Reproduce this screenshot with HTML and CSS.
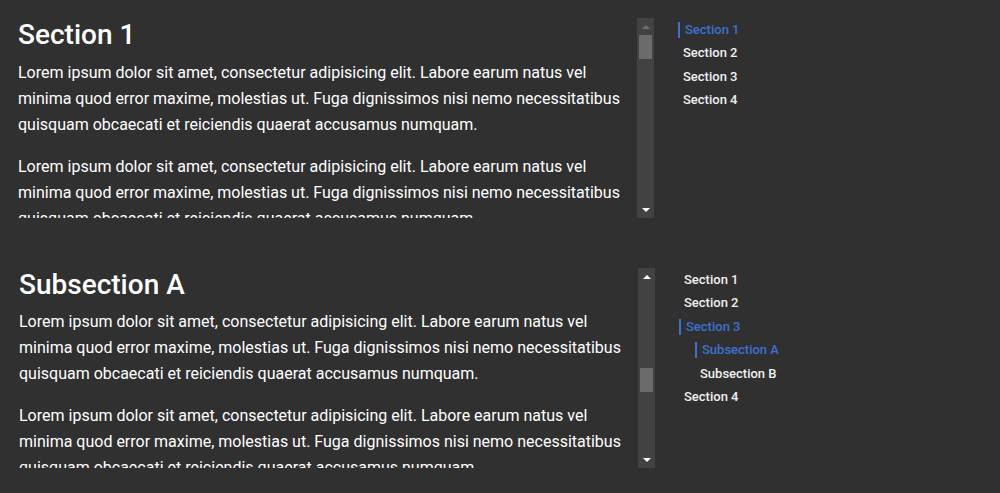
FILE: index.html
```html
<!DOCTYPE html>
<html lang="en">
<head>
<meta charset="utf-8">
<title>Scrollspy</title>
<link rel="stylesheet" href="styles.css">
</head>
<body>
<div class="page">
  <div class="example">
    <div class="scroll-area">
      <div class="scroll-box" id="box1">
        <h4 id="s1">Section 1</h4>
        <p>Lorem ipsum dolor sit amet, consectetur adipisicing elit. Labore earum natus vel minima quod error maxime, molestias ut. Fuga dignissimos nisi nemo necessitatibus quisquam obcaecati et reiciendis quaerat accusamus numquam.</p>
        <p>Lorem ipsum dolor sit amet, consectetur adipisicing elit. Labore earum natus vel minima quod error maxime, molestias ut. Fuga dignissimos nisi nemo necessitatibus quisquam obcaecati et reiciendis quaerat accusamus numquam.</p>
        <p>Lorem ipsum dolor sit amet, consectetur adipisicing elit. Labore earum natus vel minima quod error maxime, molestias ut. Fuga dignissimos nisi nemo necessitatibus quisquam obcaecati et reiciendis quaerat accusamus numquam.</p>
        <h4 id="s2">Section 2</h4>
        <p>Lorem ipsum dolor sit amet, consectetur adipisicing elit. Labore earum natus vel minima quod error maxime, molestias ut. Fuga dignissimos nisi nemo necessitatibus quisquam obcaecati et reiciendis quaerat accusamus numquam.</p>
        <p>Lorem ipsum dolor sit amet, consectetur adipisicing elit. Labore earum natus vel minima quod error maxime, molestias ut. Fuga dignissimos nisi nemo necessitatibus quisquam obcaecati et reiciendis quaerat accusamus numquam.</p>
        <h4 id="s3">Section 3</h4>
        <p>Lorem ipsum dolor sit amet, consectetur adipisicing elit. Labore earum natus vel minima quod error maxime, molestias ut. Fuga dignissimos nisi nemo necessitatibus quisquam obcaecati et reiciendis quaerat accusamus numquam.</p>
        <p>Lorem ipsum dolor sit amet, consectetur adipisicing elit. Labore earum natus vel minima quod error maxime, molestias ut. Fuga dignissimos nisi nemo necessitatibus quisquam obcaecati et reiciendis quaerat accusamus numquam.</p>
        <h4 id="s4">Section 4</h4>
        <p>Lorem ipsum dolor sit amet, consectetur adipisicing elit. Labore earum natus vel minima quod error maxime, molestias ut. Fuga dignissimos nisi nemo necessitatibus quisquam obcaecati et reiciendis quaerat accusamus numquam.</p>
        <p>Lorem ipsum dolor sit amet, consectetur adipisicing elit. Labore earum natus vel minima quod error maxime, molestias ut. Fuga dignissimos nisi nemo necessitatibus quisquam obcaecati et reiciendis quaerat accusamus numquam.</p>
      </div>
      <div class="scrollbar" aria-hidden="true">
        <div class="sb-button"><span class="arrow-up disabled"></span></div>
        <div class="sb-track"><div class="sb-thumb" style="top: 0px;"></div></div>
        <div class="sb-button"><span class="arrow-down"></span></div>
      </div>
    </div>
    <nav class="spy-nav">
      <ul class="nav-list">
        <li><a class="nav-link active" href="#s1">Section 1</a></li>
        <li><a class="nav-link" href="#s2">Section 2</a></li>
        <li><a class="nav-link" href="#s3">Section 3</a></li>
        <li><a class="nav-link" href="#s4">Section 4</a></li>
      </ul>
    </nav>
  </div>

  <div class="example example-second">
    <div class="scroll-area">
      <div class="scroll-box" id="box2">
        <h4 id="t1">Section 1</h4>
        <p>Lorem ipsum dolor sit amet, consectetur adipisicing elit. Labore earum natus vel minima quod error maxime, molestias ut. Fuga dignissimos nisi nemo necessitatibus quisquam obcaecati et reiciendis quaerat accusamus numquam.</p>
        <p>Lorem ipsum dolor sit amet, consectetur adipisicing elit. Labore earum natus vel minima quod error maxime, molestias ut. Fuga dignissimos nisi nemo necessitatibus quisquam obcaecati et reiciendis quaerat accusamus numquam.</p>
        <h4 id="t2">Section 2</h4>
        <p>Lorem ipsum dolor sit amet, consectetur adipisicing elit. Labore earum natus vel minima quod error maxime, molestias ut. Fuga dignissimos nisi nemo necessitatibus quisquam obcaecati et reiciendis quaerat accusamus numquam.</p>
        <p>Lorem ipsum dolor sit amet, consectetur adipisicing elit. Labore earum natus vel minima quod error maxime, molestias ut. Fuga dignissimos nisi nemo necessitatibus quisquam obcaecati et reiciendis quaerat accusamus numquam.</p>
        <h4 id="t3">Section 3</h4>
        <p>Lorem ipsum dolor sit amet, consectetur adipisicing elit. Labore earum natus vel minima quod error maxime, molestias ut. Fuga dignissimos nisi nemo necessitatibus quisquam obcaecati et reiciendis quaerat accusamus numquam.</p>
        <p>Lorem ipsum dolor sit amet, consectetur adipisicing elit. Labore earum natus vel minima quod error maxime, molestias ut. Fuga dignissimos nisi nemo necessitatibus quisquam obcaecati et reiciendis quaerat accusamus numquam.</p>
        <h4 id="t3a">Subsection A</h4>
        <p>Lorem ipsum dolor sit amet, consectetur adipisicing elit. Labore earum natus vel minima quod error maxime, molestias ut. Fuga dignissimos nisi nemo necessitatibus quisquam obcaecati et reiciendis quaerat accusamus numquam.</p>
        <p>Lorem ipsum dolor sit amet, consectetur adipisicing elit. Labore earum natus vel minima quod error maxime, molestias ut. Fuga dignissimos nisi nemo necessitatibus quisquam obcaecati et reiciendis quaerat accusamus numquam.</p>
        <h4 id="t3b">Subsection B</h4>
        <p>Lorem ipsum dolor sit amet, consectetur adipisicing elit. Labore earum natus vel minima quod error maxime, molestias ut. Fuga dignissimos nisi nemo necessitatibus quisquam obcaecati et reiciendis quaerat accusamus numquam.</p>
        <p>Lorem ipsum dolor sit amet, consectetur adipisicing elit. Labore earum natus vel minima quod error maxime, molestias ut. Fuga dignissimos nisi nemo necessitatibus quisquam obcaecati et reiciendis quaerat accusamus numquam.</p>
        <h4 id="t4">Section 4</h4>
        <p>Lorem ipsum dolor sit amet, consectetur adipisicing elit. Labore earum natus vel minima quod error maxime, molestias ut. Fuga dignissimos nisi nemo necessitatibus quisquam obcaecati et reiciendis quaerat accusamus numquam.</p>
        <p>Lorem ipsum dolor sit amet, consectetur adipisicing elit. Labore earum natus vel minima quod error maxime, molestias ut. Fuga dignissimos nisi nemo necessitatibus quisquam obcaecati et reiciendis quaerat accusamus numquam.</p>
      </div>
      <div class="scrollbar" aria-hidden="true">
        <div class="sb-button"><span class="arrow-up"></span></div>
        <div class="sb-track"><div class="sb-thumb" style="top: 83px;"></div></div>
        <div class="sb-button"><span class="arrow-down"></span></div>
      </div>
    </div>
    <nav class="spy-nav">
      <ul class="nav-list">
        <li><a class="nav-link" href="#t1">Section 1</a></li>
        <li><a class="nav-link" href="#t2">Section 2</a></li>
        <li>
          <a class="nav-link active" href="#t3">Section 3</a>
          <ul class="nav-list nav-sub">
            <li><a class="nav-link active" href="#t3a">Subsection A</a></li>
            <li><a class="nav-link" href="#t3b">Subsection B</a></li>
          </ul>
        </li>
        <li><a class="nav-link" href="#t4">Section 4</a></li>
      </ul>
    </nav>
  </div>
</div>
<script src="script.js"></script>
</body>
</html>
```

FILE: styles.css
```css
html {
  color-scheme: dark;
}

body {
  margin: 0;
  background: #303030;
  color: #ffffff;
  font-family: Roboto, "Liberation Sans", sans-serif;
}

.page {
  padding: 18px 0 0 18px;
  display: flex;
  flex-direction: column;
  gap: 50px;
}

.example {
  display: flex;
  align-items: flex-start;
}

.example-second {
  margin-left: 1px;
}

.scroll-area {
  display: flex;
  flex: none;
  height: 200px;
}

.scroll-box {
  width: 619px;
  height: 200px;
  overflow-y: auto;
  scrollbar-width: none;
  position: relative;
}

.scroll-box::-webkit-scrollbar {
  display: none;
}

.scroll-box h4 {
  margin: 0 0 8px;
  font-size: 28px;
  font-weight: 500;
  line-height: 1.2;
}

.scroll-box p {
  margin: 0 0 16px;
  font-size: 16px;
  line-height: 26px;
}

/* drawn scrollbar */
.scrollbar {
  width: 17px;
  height: 200px;
  background: #424242;
  display: flex;
  flex-direction: column;
}

.sb-button {
  height: 17px;
  flex: none;
  display: flex;
  align-items: center;
  justify-content: center;
}

.sb-track {
  flex: 1;
  position: relative;
}

.sb-thumb {
  position: absolute;
  left: 2px;
  right: 2px;
  height: 24px;
  background: #6b6b6b;
}

.arrow-up,
.arrow-down {
  width: 0;
  height: 0;
  border-left: 4px solid transparent;
  border-right: 4px solid transparent;
}

.arrow-up {
  border-bottom: 4px solid #ffffff;
}

.arrow-up.disabled {
  border-bottom-color: #6e6e6e;
}

.arrow-down {
  border-top: 4px solid #ffffff;
}

.spy-nav {
  margin-left: 24px;
}

.nav-list {
  list-style: none;
  margin: 0;
  padding: 0;
}

.nav-list li {
  padding: 3.75px 0;
}

.nav-sub {
  margin: 3.75px 0 -3.75px 16px;
}

.nav-link {
  display: block;
  padding-left: 5px;
  font-size: 13px;
  font-weight: 500;
  line-height: 16px;
  color: #f0f0f0;
  text-decoration: none;
}

.nav-link.active {
  color: #3c70d2;
  border-left: 2px solid #3c70d2;
}
```

FILE: script.js
```js
var box = document.getElementById('box2');
var target = document.getElementById('t3a');
box.scrollTop = target.offsetTop;
```
